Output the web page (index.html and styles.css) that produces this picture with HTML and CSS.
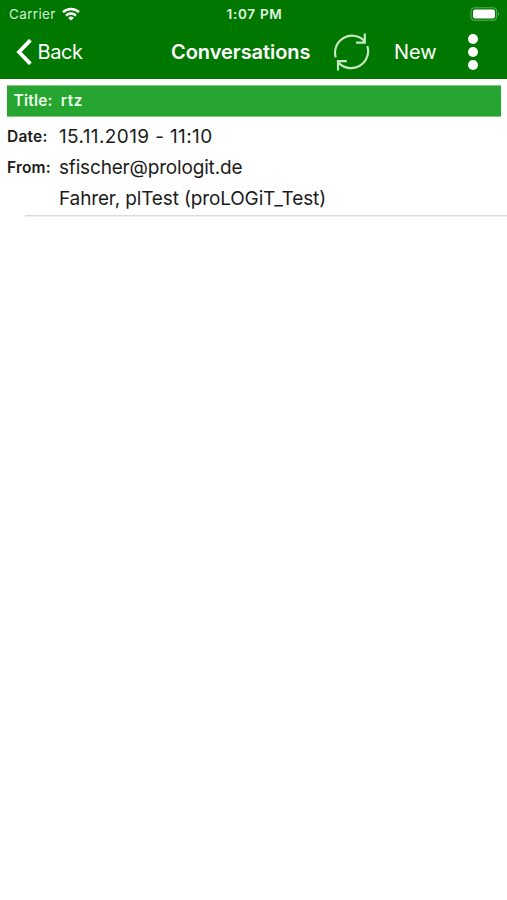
FILE: index.html
```html
<!DOCTYPE html>
<html lang="en">
<head>
    <meta charset="utf-8">
    <title>Conversations</title>
    <link rel="stylesheet" href="styles.css">
</head>
<body>
    <header class="header">
        <div class="status">
            <div class="status-left">
                <span class="carrier">Carrier</span>
                <svg class="wifi" width="18" height="14" viewBox="0 0 18 14" fill="none" stroke="#fff" stroke-width="2.5">
                    <path d="M1 5.2a11.4 11.4 0 0 1 16 0"/>
                    <path d="M4 8.6a7.2 7.2 0 0 1 10 0"/>
                    <path d="M9 13.6 6.2 10.9a4 4 0 0 1 5.6 0z" fill="#fff" stroke="none"/>
                </svg>
            </div>
            <span class="time">1:07 PM</span>
            <svg class="battery" width="30" height="14" viewBox="0 0 30 14">
                <rect x="1" y=".7" width="25.6" height="12.6" rx="3.6" fill="none" stroke="#58a858" stroke-width="1.1"/>
                <rect x="3" y="2.6" width="22" height="8.8" rx="2" fill="#fff"/>
                <path d="M28 4.8a2.6 2.6 0 0 1 0 4.4z" fill="#58a858"/>
            </svg>
        </div>
        <nav class="nav">
            <button class="back">
                <svg width="16" height="26" viewBox="0 0 16 26" fill="none" stroke="#fff" stroke-width="3.8">
                    <path d="M14.4 1.2 3 13l11.4 11.8"/>
                </svg>
                <span class="back-label">Back</span>
            </button>
            <h1 class="heading">Conversations</h1>
            <button class="refresh">
                <svg width="38" height="40" viewBox="0 0 38 40" fill="none" stroke="#c4e8c4" stroke-width="2.2">
                    <path d="M2.7 25.4A17 17 0 0 1 32 9.7M31.8 1.4v9.2H23"/>
                    <path d="M34.3 14A17 17 0 0 1 5.2 30.2M5 38.4v-9.2h8.8"/>
                </svg>
            </button>
            <button class="new">New</button>
            <button class="more">
                <span class="dot"></span>
                <span class="dot"></span>
                <span class="dot"></span>
            </button>
        </nav>
    </header>
    <main class="conversation">
        <div class="title-bar">
            <span class="title-label">Title:</span>
            <span class="title-value">rtz</span>
        </div>
        <div class="row">
            <span class="label">Date:</span>
            <span class="value date">15.11.2019 - 11:10</span>
        </div>
        <div class="row">
            <span class="label">From:</span>
            <span class="value email">sfischer@prologit.de</span>
        </div>
        <div class="row">
            <span class="label"></span>
            <span class="value driver">Fahrer, plTest (proLOGiT_Test)</span>
        </div>
    </main>
</body>
</html>
```
FILE: styles.css
```css
body{
    margin: 0;
    background-color: #ffffff;
    color: #1c1c1c;
    font-family: Inter, "Liberation Sans", sans-serif;
}

button{
    padding: 0;
    border: none;
    background: none;
    color: inherit;
    font: inherit;
}

svg{
    display: block;
}

.header{
    height: 79px;
    background-color: #007800;
    color: #ffffff;
}

.status{
    display: grid;
    grid-template-columns: 1fr auto 1fr;
    align-items: center;
    height: 27px;
    padding: 0 7px 0 9px;
    font-size: 13.5px;
}

.status-left{
    display: flex;
    align-items: center;
    gap: 6px;
}

.carrier{
    color: #d5eed5;
    letter-spacing: 0.35px;
}

.time{
    font-weight: 600;
    color: #e2f5e2;
    letter-spacing: 0.7px;
}

.battery{
    justify-self: end;
}

.nav{
    display: flex;
    align-items: center;
    height: 50px;
    font-size: 20px;
}

.back{
    display: flex;
    align-items: center;
    gap: 5.5px;
    box-sizing: border-box;
    width: 171px;
    padding-left: 16px;
    letter-spacing: -0.4px;
}

.heading{
    width: 140px;
    margin: 0 22px 0 0;
    font-size: 20px;
    font-weight: 600;
    letter-spacing: -0.05px;
    white-space: nowrap;
}

.new{
    width: 42px;
    margin: 0 31.5px 0 23px;
}

.more{
    display: flex;
    flex-direction: column;
    gap: 2.4px;
}

.dot{
    width: 10.4px;
    height: 10.4px;
    border-radius: 50%;
    background-color: #ffffff;
}

.conversation{
    padding-top: 6px;
}

.title-bar{
    display: flex;
    align-items: center;
    gap: 8px;
    box-sizing: border-box;
    height: 32px;
    margin: 0 6px 4px 7px;
    padding: 0 0 1px 6.5px;
    border: solid #7fca84;
    border-width: 1px 0;
    background-color: #26a530;
    color: #ecffec;
    font-size: 15.5px;
    font-weight: 600;
    letter-spacing: 0.2px;
}

.title-value{
    letter-spacing: 0.6px;
}

.row{
    display: flex;
    align-items: center;
    height: 31px;
    padding-left: 7px;
}

.label{
    width: 52px;
    padding-bottom: 1px;
    font-size: 15.5px;
    font-weight: 600;
    letter-spacing: 0.2px;
}

.value{
    font-size: 19px;
    white-space: nowrap;
}

.date{
    letter-spacing: 0.38px;
}

.email{
    letter-spacing: -0.18px;
}

.driver{
    letter-spacing: -0.14px;
}

/* divider starts indented and runs to the right edge */
.conversation::after{
    content: "";
    display: block;
    height: 1px;
    margin: 1px 0 0 25px;
    border-bottom: 1px solid #eeeeee;
    background-color: #dadada;
}
```
